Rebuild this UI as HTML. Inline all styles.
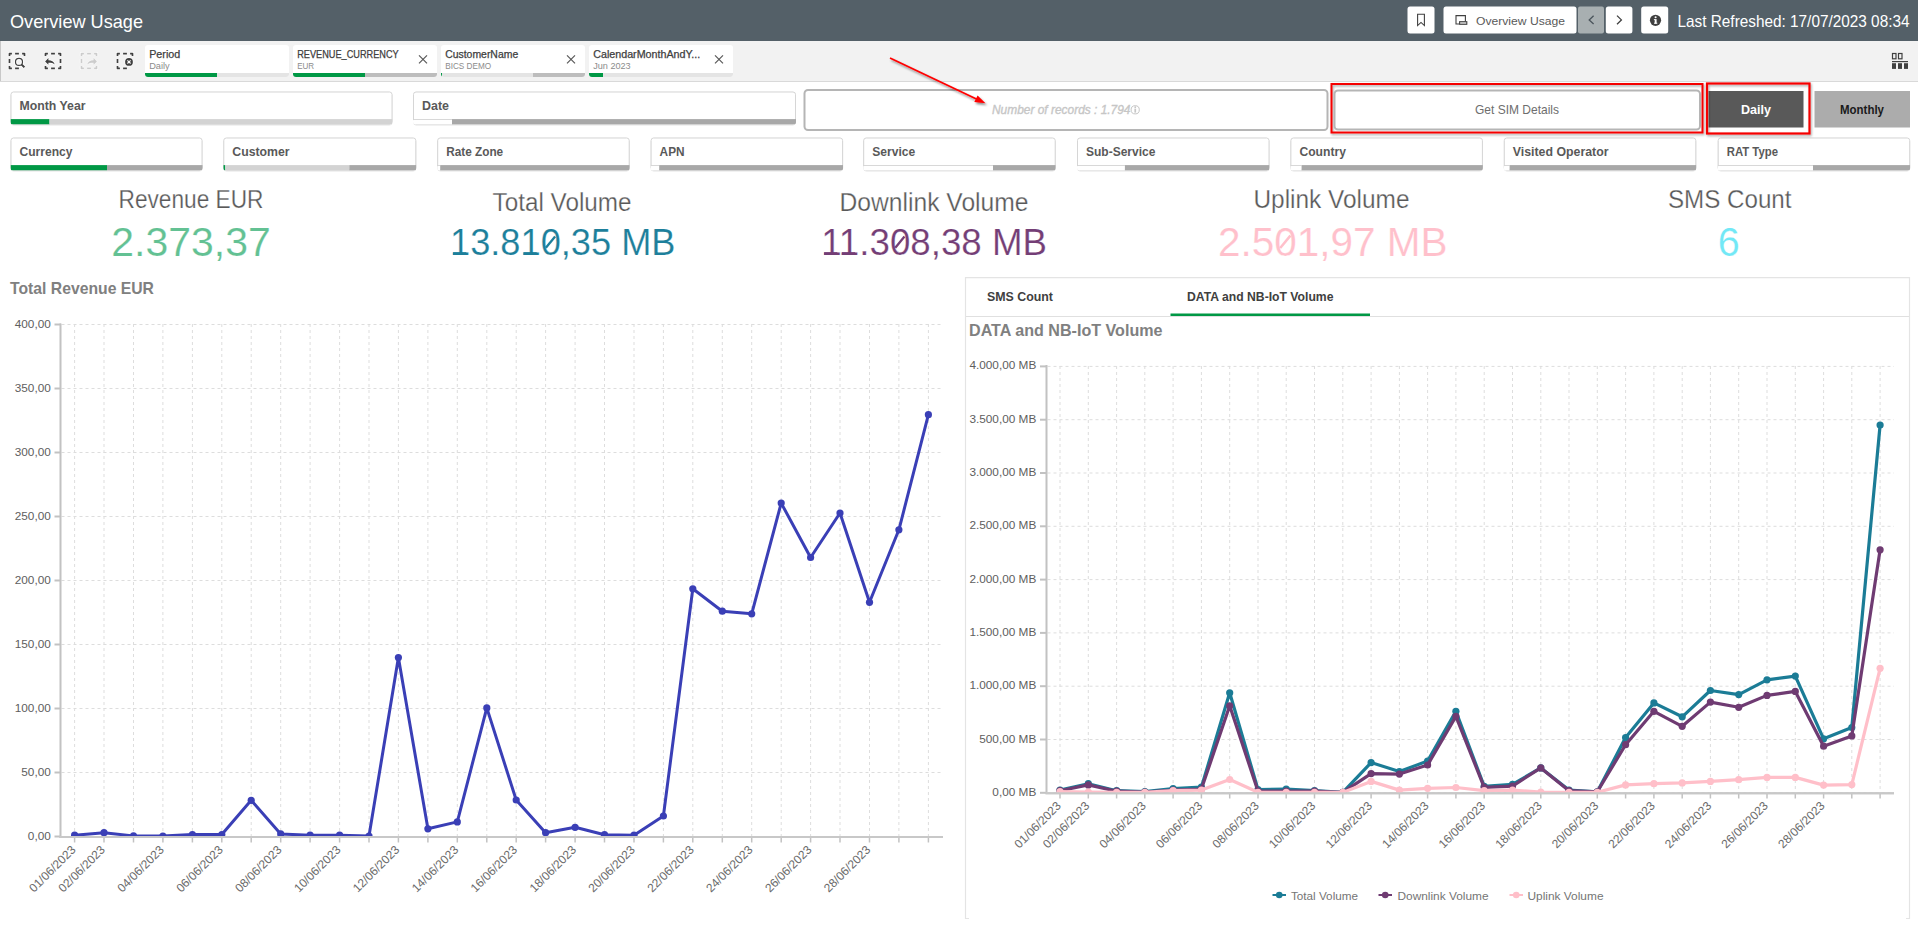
<!DOCTYPE html>
<html><head><meta charset="utf-8"><title>Overview Usage</title>
<style>html,body{margin:0;padding:0;background:#fff;overflow:hidden;width:1918px;height:928px}svg{display:block;font-family:"Liberation Sans", sans-serif}</style>
</head><body>
<svg width="1918" height="928" viewBox="0 0 1918 928">
<rect x="0" y="0" width="1918" height="41" fill="#546068"/>
<text x="10" y="28" font-size="18.4" fill="#ffffff" textLength="133" lengthAdjust="spacingAndGlyphs">Overview Usage</text>
<rect x="1407.5" y="6.5" width="27" height="27" fill="#ffffff" rx="2.5"/>
<path d="M1417.6 25.6 V14.3 H1424.4 V25.6 L1421 22.4 Z" fill="none" stroke="#404040" stroke-width="1.1" stroke-linejoin="miter"/>
<rect x="1443.5" y="6.5" width="133" height="27" fill="#ffffff" rx="2.5"/>
<path d="M1459 24 H1456 V15.6 H1465.4 V21.6" fill="none" stroke="#404040" stroke-width="1.1"/><rect x="1459.6" y="21.7" width="7.2" height="2.6" fill="#dcdcdc" stroke="#404040" stroke-width="1.1"/>
<text x="1476" y="24.5" font-size="11.8" fill="#595959" textLength="89" lengthAdjust="spacingAndGlyphs">Overview Usage</text>
<rect x="1578" y="6.5" width="26" height="27" fill="#a8afb1" rx="2"/>
<path d="M1593.6 15.8 L1589.2 19.9 L1593.6 24" fill="none" stroke="#4a545b" stroke-width="1.3"/>
<rect x="1605.8" y="6.5" width="26.6" height="27" fill="#ffffff" rx="2.5"/>
<path d="M1617 15.6 L1621.4 19.9 L1617 24.2" fill="none" stroke="#404040" stroke-width="1.3"/>
<rect x="1641.2" y="6.5" width="27" height="27" fill="#ffffff" rx="2.5"/>
<circle cx="1655.5" cy="20.3" r="5.6" fill="#404040"/><rect x="1654.7" y="19.1" width="1.9" height="4.5" fill="#fff"/><rect x="1653.9" y="19.1" width="1" height="1" fill="#fff"/><rect x="1654" y="22.7" width="3.3" height="1" fill="#fff"/><circle cx="1655.6" cy="17.2" r="1.05" fill="#fff"/>
<text x="1677.5" y="26.6" font-size="16.5" fill="#ffffff" textLength="232" lengthAdjust="spacingAndGlyphs">Last Refreshed: 17/07/2023 08:34</text>
<rect x="0" y="41" width="1918" height="40" fill="#f2f2f2"/>
<rect x="0" y="81" width="1918" height="1" fill="#d9d9d9"/>
<rect x="0" y="41" width="1" height="40" fill="#c8c8c8"/>
<path d="M9.5 55.9 V53.6 H11.9 M15.1 53.6 H18.9 M22.1 53.6 H24.5 V55.9 M9.5 59.1 V62.9 M9.5 66.1 V68.4 H11.9 M15.1 68.4 H18.9" fill="none" stroke="#ffffff" stroke-width="3.4" stroke-linejoin="round" opacity="0.9"/>
<path d="M9.5 55.9 V53.6 H11.9 M15.1 53.6 H18.9 M22.1 53.6 H24.5 V55.9 M9.5 59.1 V62.9 M9.5 66.1 V68.4 H11.9 M15.1 68.4 H18.9" fill="none" stroke="#404040" stroke-width="1.7" stroke-linejoin="round"/>
<g><circle cx="19" cy="61.9" r="3.5" fill="none" stroke="#fff" stroke-width="3.2" opacity="0.9"/><path d="M21.6 64.6 L24.4 67.3" stroke="#fff" stroke-width="3.6" opacity="0.9"/><circle cx="19" cy="61.9" r="3.5" fill="none" stroke="#404040" stroke-width="1.2"/><path d="M21.6 64.6 L24.4 67.3" stroke="#404040" stroke-width="2"/></g>
<path d="M45.5 55.9 V53.6 H47.9 M51.1 53.6 H54.9 M58.1 53.6 H60.5 V55.9 M60.5 59.1 V62.9 M45.5 66.1 V68.4 H47.9 M51.1 68.4 H54.9 M58.1 68.4 H60.5 V66.1" fill="none" stroke="#ffffff" stroke-width="3.4" stroke-linejoin="round" opacity="0.9"/>
<path d="M45.5 55.9 V53.6 H47.9 M51.1 53.6 H54.9 M58.1 53.6 H60.5 V55.9 M60.5 59.1 V62.9 M45.5 66.1 V68.4 H47.9 M51.1 68.4 H54.9 M58.1 68.4 H60.5 V66.1" fill="none" stroke="#404040" stroke-width="1.7" stroke-linejoin="round"/>
<path d="M45.1 61.5 L48.4 58.1 V60.2 C51.5 60.2 53.8 61.5 54.8 64.5 C53.5 63.2 51.5 62.8 48.4 62.8 V64.7 Z" fill="#404040" stroke="#fff" stroke-width="1.4" paint-order="stroke" stroke-linejoin="round"/>
<path d="M81.5 55.9 V53.6 H83.9 M87.1 53.6 H90.9 M94.1 53.6 H96.5 V55.9 M81.5 59.1 V62.9 M81.5 66.1 V68.4 H83.9 M87.1 68.4 H90.9 M94.1 68.4 H96.5 V66.1" fill="none" stroke="#ffffff" stroke-width="3.4" stroke-linejoin="round" opacity="0.9"/>
<path d="M81.5 55.9 V53.6 H83.9 M87.1 53.6 H90.9 M94.1 53.6 H96.5 V55.9 M81.5 59.1 V62.9 M81.5 66.1 V68.4 H83.9 M87.1 68.4 H90.9 M94.1 68.4 H96.5 V66.1" fill="none" stroke="#cccccc" stroke-width="1.7" stroke-linejoin="round"/>
<path d="M45.1 61.5 L48.4 58.1 V60.2 C51.5 60.2 53.8 61.5 54.8 64.5 C53.5 63.2 51.5 62.8 48.4 62.8 V64.7 Z" transform="translate(142 0) scale(-1 1)" fill="#cccccc" stroke="#f6f6f6" stroke-width="1.4" paint-order="stroke" stroke-linejoin="round"/>
<path d="M117.5 55.9 V53.6 H119.9 M123.1 53.6 H126.9 M130.1 53.6 H132.5 V55.9 M117.5 59.1 V62.9 M117.5 66.1 V68.4 H119.9 M123.1 68.4 H126.9" fill="none" stroke="#ffffff" stroke-width="3.4" stroke-linejoin="round" opacity="0.9"/>
<path d="M117.5 55.9 V53.6 H119.9 M123.1 53.6 H126.9 M130.1 53.6 H132.5 V55.9 M117.5 59.1 V62.9 M117.5 66.1 V68.4 H119.9 M123.1 68.4 H126.9" fill="none" stroke="#404040" stroke-width="1.7" stroke-linejoin="round"/>
<circle cx="129" cy="61.9" r="4.6" fill="#fff" opacity="0.9"/><circle cx="129" cy="61.9" r="3.9" fill="#404040"/><path d="M127.4 60.3 L130.6 63.5 M130.6 60.3 L127.4 63.5" stroke="#fff" stroke-width="1.1"/>
<rect x="145" y="45" width="144" height="32" fill="#ffffff" rx="3"/>
<clipPath id="pc145"><rect x="145" y="45" width="144" height="32" rx="3"/></clipPath>
<g clip-path="url(#pc145)">
<rect x="145" y="73" width="72" height="4" fill="#009845"/>
<rect x="217" y="73" width="72" height="4" fill="#e4e4e4"/>
</g>
<text x="149.2" y="58.3" font-size="10" fill="#404040" textLength="31" lengthAdjust="spacingAndGlyphs" stroke="#404040" stroke-width="0.25">Period</text>
<text x="149.2" y="68.9" font-size="9.4" fill="#8c8c8c" textLength="20.5" lengthAdjust="spacingAndGlyphs">Daily</text>
<rect x="293" y="45" width="144" height="32" fill="#ffffff" rx="3"/>
<clipPath id="pc293"><rect x="293" y="45" width="144" height="32" rx="3"/></clipPath>
<g clip-path="url(#pc293)">
<rect x="293" y="73" width="72" height="4" fill="#009845"/>
<rect x="365" y="73" width="72" height="4" fill="#bdbdbd"/>
</g>
<text x="297.2" y="58.3" font-size="10" fill="#404040" textLength="101.5" lengthAdjust="spacingAndGlyphs" stroke="#404040" stroke-width="0.25">REVENUE_CURRENCY</text>
<text x="297.2" y="68.9" font-size="9.4" fill="#8c8c8c" textLength="17" lengthAdjust="spacingAndGlyphs">EUR</text>
<path d="M419 55.3 l8 8 M427 55.3 l-8 8" stroke="#595959" stroke-width="1.2"/>
<rect x="441" y="45" width="144" height="32" fill="#ffffff" rx="3"/>
<clipPath id="pc441"><rect x="441" y="45" width="144" height="32" rx="3"/></clipPath>
<g clip-path="url(#pc441)">
<rect x="441" y="73" width="1" height="4" fill="#009845"/>
<rect x="442" y="73" width="91" height="4" fill="#e4e4e4"/>
<rect x="533" y="73" width="52" height="4" fill="#bdbdbd"/>
</g>
<text x="445.2" y="58.3" font-size="10" fill="#404040" textLength="73" lengthAdjust="spacingAndGlyphs" stroke="#404040" stroke-width="0.25">CustomerName</text>
<text x="445.2" y="68.9" font-size="9.4" fill="#8c8c8c" textLength="46" lengthAdjust="spacingAndGlyphs">BICS DEMO</text>
<path d="M567 55.3 l8 8 M575 55.3 l-8 8" stroke="#595959" stroke-width="1.2"/>
<rect x="589" y="45" width="144" height="32" fill="#ffffff" rx="3"/>
<clipPath id="pc589"><rect x="589" y="45" width="144" height="32" rx="3"/></clipPath>
<g clip-path="url(#pc589)">
<rect x="589" y="73" width="14" height="4" fill="#009845"/>
<rect x="603" y="73" width="130" height="4" fill="#e4e4e4"/>
</g>
<text x="593.2" y="58.3" font-size="10" fill="#404040" textLength="107" lengthAdjust="spacingAndGlyphs" stroke="#404040" stroke-width="0.25">CalendarMonthAndY...</text>
<text x="593.2" y="68.9" font-size="9.4" fill="#8c8c8c" textLength="37.5" lengthAdjust="spacingAndGlyphs">Jun 2023</text>
<path d="M715 55.3 l8 8 M723 55.3 l-8 8" stroke="#595959" stroke-width="1.2"/>
<rect x="1892.5" y="53.5" width="3.5" height="5.3" fill="none" stroke="#404040" stroke-width="1.2"/>
<rect x="1898.5" y="53.5" width="3.5" height="5.3" fill="none" stroke="#404040" stroke-width="1.2"/>
<rect x="1892" y="61" width="16" height="1.2" fill="#404040"/>
<rect x="1892" y="63.2" width="4" height="5.7" fill="#404040"/>
<rect x="1898" y="63.2" width="4" height="5.7" fill="#404040"/>
<rect x="1904" y="63.2" width="4" height="5.7" fill="#404040"/>
<defs><filter id="sh" x="-5%" y="-20%" width="110%" height="150%"><feDropShadow dx="0" dy="0.6" stdDeviation="0.6" flood-color="#000" flood-opacity="0.18"/></filter><filter id="sh3" x="-10%" y="-20%" width="120%" height="150%"><feDropShadow dx="1.5" dy="2" stdDeviation="1.3" flood-color="#000" flood-opacity="0.45"/></filter><filter id="sh2" x="-5%" y="-20%" width="110%" height="150%"><feDropShadow dx="1" dy="1.5" stdDeviation="1.2" flood-color="#000" flood-opacity="0.35"/></filter></defs>
<rect x="11.0" y="92.0" width="381" height="32" rx="2.5" fill="#ffffff" stroke="#d6d6d6" stroke-width="1" filter="url(#sh)"/>
<clipPath id="fc10_91"><rect x="10.5" y="91.5" width="382" height="33" rx="2.5"/></clipPath>
<g clip-path="url(#fc10_91)">
<rect x="10.5" y="119.1" width="39" height="5.4" fill="#009845"/>
<rect x="49.5" y="119.1" width="343" height="5.4" fill="#d3d3d3"/>
</g>
<text x="19.5" y="109.7" font-size="12.3" fill="#595959" font-weight="bold" textLength="66" lengthAdjust="spacingAndGlyphs">Month Year</text>
<rect x="413.5" y="92.0" width="382" height="32" rx="2.5" fill="#ffffff" stroke="#d6d6d6" stroke-width="1" filter="url(#sh)"/>
<clipPath id="fc413_91"><rect x="413" y="91.5" width="383" height="33" rx="2.5"/></clipPath>
<g clip-path="url(#fc413_91)">
<rect x="413" y="119.1" width="39" height="1" fill="#d4d4d4"/>
<rect x="413" y="120.1" width="39" height="4.4" fill="#ffffff"/>
<rect x="452" y="119.1" width="344" height="5.4" fill="#a8a8a8"/>
</g>
<text x="422" y="109.7" font-size="12.3" fill="#595959" font-weight="bold" textLength="27" lengthAdjust="spacingAndGlyphs">Date</text>
<rect x="11.0" y="138.0" width="191" height="32" rx="2.5" fill="#ffffff" stroke="#d6d6d6" stroke-width="1" filter="url(#sh)"/>
<clipPath id="fc10_137"><rect x="10.5" y="137.5" width="192" height="33" rx="2.5"/></clipPath>
<g clip-path="url(#fc10_137)">
<rect x="10.5" y="165.1" width="96.5" height="5.4" fill="#009845"/>
<rect x="107.0" y="165.1" width="96" height="5.4" fill="#a8a8a8"/>
</g>
<text x="19.5" y="155.7" font-size="12.3" fill="#595959" font-weight="bold" textLength="53" lengthAdjust="spacingAndGlyphs">Currency</text>
<rect x="223.8" y="138.0" width="192" height="32" rx="2.5" fill="#ffffff" stroke="#d6d6d6" stroke-width="1" filter="url(#sh)"/>
<clipPath id="fc223_137"><rect x="223.3" y="137.5" width="193" height="33" rx="2.5"/></clipPath>
<g clip-path="url(#fc223_137)">
<rect x="223.3" y="165.1" width="2" height="5.4" fill="#009845"/>
<rect x="225.3" y="165.1" width="124" height="5.4" fill="#d3d3d3"/>
<rect x="349.3" y="165.1" width="67" height="5.4" fill="#a8a8a8"/>
</g>
<text x="232.3" y="155.7" font-size="12.3" fill="#595959" font-weight="bold" textLength="57.3" lengthAdjust="spacingAndGlyphs">Customer</text>
<rect x="437.7" y="138.0" width="191.5" height="32" rx="2.5" fill="#ffffff" stroke="#d6d6d6" stroke-width="1" filter="url(#sh)"/>
<clipPath id="fc437_137"><rect x="437.2" y="137.5" width="192.5" height="33" rx="2.5"/></clipPath>
<g clip-path="url(#fc437_137)">
<rect x="437.2" y="165.1" width="3" height="1" fill="#d4d4d4"/>
<rect x="437.2" y="166.1" width="3" height="4.4" fill="#ffffff"/>
<rect x="440.2" y="165.1" width="189.5" height="5.4" fill="#a8a8a8"/>
</g>
<text x="446.2" y="155.7" font-size="12.3" fill="#595959" font-weight="bold" textLength="57" lengthAdjust="spacingAndGlyphs">Rate Zone</text>
<rect x="651.1" y="138.0" width="191.5" height="32" rx="2.5" fill="#ffffff" stroke="#d6d6d6" stroke-width="1" filter="url(#sh)"/>
<clipPath id="fc650_137"><rect x="650.6" y="137.5" width="192.5" height="33" rx="2.5"/></clipPath>
<g clip-path="url(#fc650_137)">
<rect x="650.6" y="165.1" width="8.6" height="1" fill="#d4d4d4"/>
<rect x="650.6" y="166.1" width="8.6" height="4.4" fill="#ffffff"/>
<rect x="659.2" y="165.1" width="183.9" height="5.4" fill="#a8a8a8"/>
</g>
<text x="659.6" y="155.7" font-size="12.3" fill="#595959" font-weight="bold" textLength="25" lengthAdjust="spacingAndGlyphs">APN</text>
<rect x="863.7" y="138.0" width="191.5" height="32" rx="2.5" fill="#ffffff" stroke="#d6d6d6" stroke-width="1" filter="url(#sh)"/>
<clipPath id="fc863_137"><rect x="863.2" y="137.5" width="192.5" height="33" rx="2.5"/></clipPath>
<g clip-path="url(#fc863_137)">
<rect x="863.2" y="165.1" width="129.8" height="1" fill="#d4d4d4"/>
<rect x="863.2" y="166.1" width="129.8" height="4.4" fill="#ffffff"/>
<rect x="993.0" y="165.1" width="62.69999999999999" height="5.4" fill="#a8a8a8"/>
</g>
<text x="872.2" y="155.7" font-size="12.3" fill="#595959" font-weight="bold" textLength="43" lengthAdjust="spacingAndGlyphs">Service</text>
<rect x="1077.5" y="138.0" width="191.5" height="32" rx="2.5" fill="#ffffff" stroke="#d6d6d6" stroke-width="1" filter="url(#sh)"/>
<clipPath id="fc1077_137"><rect x="1077" y="137.5" width="192.5" height="33" rx="2.5"/></clipPath>
<g clip-path="url(#fc1077_137)">
<rect x="1077" y="165.1" width="47.9" height="1" fill="#d4d4d4"/>
<rect x="1077" y="166.1" width="47.9" height="4.4" fill="#ffffff"/>
<rect x="1124.9" y="165.1" width="144.6" height="5.4" fill="#a8a8a8"/>
</g>
<text x="1086" y="155.7" font-size="12.3" fill="#595959" font-weight="bold" textLength="69.4" lengthAdjust="spacingAndGlyphs">Sub-Service</text>
<rect x="1290.9" y="138.0" width="191.5" height="32" rx="2.5" fill="#ffffff" stroke="#d6d6d6" stroke-width="1" filter="url(#sh)"/>
<clipPath id="fc1290_137"><rect x="1290.4" y="137.5" width="192.5" height="33" rx="2.5"/></clipPath>
<g clip-path="url(#fc1290_137)">
<rect x="1290.4" y="165.1" width="11.2" height="1" fill="#d4d4d4"/>
<rect x="1290.4" y="166.1" width="11.2" height="4.4" fill="#ffffff"/>
<rect x="1301.6000000000001" y="165.1" width="181.3" height="5.4" fill="#a8a8a8"/>
</g>
<text x="1299.4" y="155.7" font-size="12.3" fill="#595959" font-weight="bold" textLength="46.5" lengthAdjust="spacingAndGlyphs">Country</text>
<rect x="1504.3" y="138.0" width="191.5" height="32" rx="2.5" fill="#ffffff" stroke="#d6d6d6" stroke-width="1" filter="url(#sh)"/>
<clipPath id="fc1503_137"><rect x="1503.8" y="137.5" width="192.5" height="33" rx="2.5"/></clipPath>
<g clip-path="url(#fc1503_137)">
<rect x="1503.8" y="165.1" width="5.8" height="1" fill="#d4d4d4"/>
<rect x="1503.8" y="166.1" width="5.8" height="4.4" fill="#ffffff"/>
<rect x="1509.6" y="165.1" width="186.7" height="5.4" fill="#a8a8a8"/>
</g>
<text x="1512.8" y="155.7" font-size="12.3" fill="#595959" font-weight="bold" textLength="95.7" lengthAdjust="spacingAndGlyphs">Visited Operator</text>
<rect x="1718.2" y="138.0" width="191.5" height="32" rx="2.5" fill="#ffffff" stroke="#d6d6d6" stroke-width="1" filter="url(#sh)"/>
<clipPath id="fc1717_137"><rect x="1717.7" y="137.5" width="192.5" height="33" rx="2.5"/></clipPath>
<g clip-path="url(#fc1717_137)">
<rect x="1717.7" y="165.1" width="95.3" height="1" fill="#d4d4d4"/>
<rect x="1717.7" y="166.1" width="95.3" height="4.4" fill="#ffffff"/>
<rect x="1813.0" y="165.1" width="97.2" height="5.4" fill="#a8a8a8"/>
</g>
<text x="1726.7" y="155.7" font-size="12.3" fill="#595959" font-weight="bold" textLength="51.3" lengthAdjust="spacingAndGlyphs">RAT Type</text>
<rect x="804.5" y="90" width="523" height="40" rx="3.5" fill="#fff" stroke="#b5b5b5" stroke-width="2"/>
<text x="992" y="114" font-size="12.2" fill="#c6c6c6" font-style="italic" textLength="138.5" lengthAdjust="spacingAndGlyphs" stroke="#c6c6c6" stroke-width="0.35">Number of records : 1.794</text>
<circle cx="1135.2" cy="109.8" r="4.1" fill="none" stroke="#c6c6c6" stroke-width="1"/><rect x="1134.4" y="108.6" width="1.7" height="4" fill="#c6c6c6"/><circle cx="1135.25" cy="107.2" r="0.9" fill="#c6c6c6"/>
<rect x="1331.5" y="84" width="371" height="48.5" fill="none" stroke="#f50000" stroke-width="2" filter="url(#sh2)"/>
<rect x="1334.5" y="90.5" width="365.5" height="39" rx="3.5" fill="#fff" stroke="#b5b5b5" stroke-width="2"/>
<text x="1475" y="114" font-size="12.6" fill="#6e6e6e" textLength="84" lengthAdjust="spacingAndGlyphs">Get SIM Details</text>
<rect x="1708.5" y="91" width="95" height="36.5" fill="#595959"/>
<rect x="1707" y="83.5" width="102.5" height="50" fill="none" stroke="#f50000" stroke-width="2.2" filter="url(#sh2)"/>
<text x="1741" y="114" font-size="12.6" fill="#ffffff" font-weight="bold" textLength="30" lengthAdjust="spacingAndGlyphs">Daily</text>
<rect x="1814.5" y="91" width="95.5" height="36.5" fill="#acacac"/>
<text x="1840" y="114" font-size="12.6" fill="#1a1a1a" font-weight="bold" textLength="44" lengthAdjust="spacingAndGlyphs">Monthly</text>
<g filter="url(#sh3)"><path d="M890 58 L978 99.8" stroke="#ff0000" stroke-width="1.8"/><path d="M985.5 103.2 L974.3 101.9 L977.6 95.4 z" fill="#ff0000"/></g>
<text x="118.5" y="208" font-size="25.3" fill="#595959" textLength="145" lengthAdjust="spacingAndGlyphs" stroke="#fff" stroke-width="0.25">Revenue EUR</text>
<text x="111.3" y="256" font-size="40" fill="#63c193" textLength="159.5" lengthAdjust="spacingAndGlyphs" stroke="#fff" stroke-width="0.2">2.373,37</text>
<text x="492.5" y="211" font-size="25.4" fill="#595959" textLength="139" lengthAdjust="spacingAndGlyphs" stroke="#fff" stroke-width="0.25">Total Volume</text>
<text x="450" y="255" font-size="36" fill="#1d7f9b" textLength="225.5" lengthAdjust="spacingAndGlyphs" stroke="#fff" stroke-width="0.2">13.810,35 MB</text>
<text x="839.5" y="211" font-size="25.4" fill="#595959" textLength="189" lengthAdjust="spacingAndGlyphs" stroke="#fff" stroke-width="0.25">Downlink Volume</text>
<text x="821.2" y="255" font-size="36" fill="#743e76" textLength="225.8" lengthAdjust="spacingAndGlyphs" stroke="#fff" stroke-width="0.2">11.308,38 MB</text>
<text x="1253.5" y="208" font-size="25.0" fill="#595959" textLength="156" lengthAdjust="spacingAndGlyphs" stroke="#fff" stroke-width="0.25">Uplink Volume</text>
<text x="1218" y="256" font-size="40" fill="#ffc0cb" textLength="229.5" lengthAdjust="spacingAndGlyphs" stroke="#fff" stroke-width="0.2">2.501,97 MB</text>
<text x="1668" y="208" font-size="25.3" fill="#595959" textLength="123.5" lengthAdjust="spacingAndGlyphs" stroke="#fff" stroke-width="0.25">SMS Count</text>
<text x="1717.8" y="256" font-size="40" fill="#72e8f6" textLength="22" lengthAdjust="spacingAndGlyphs" stroke="#fff" stroke-width="0.2">6</text>
<path d="M545.9 247.8 L555.1 236.6" stroke="#1d7f9b" stroke-width="2.30"/>
<path d="M895.3 247.8 L904.5 236.6" stroke="#743e76" stroke-width="2.30"/>
<path d="M1280.2 248.0 L1290.4 235.6" stroke="#ffc0cb" stroke-width="2.56"/>
<rect x="453.1" y="252.2" width="13.2" height="2.75" fill="#1d7f9b"/>
<rect x="523.5" y="252.2" width="13.2" height="2.75" fill="#1d7f9b"/>
<rect x="824.1" y="252.2" width="13.2" height="2.75" fill="#743e76"/>
<rect x="841.9" y="252.2" width="13.2" height="2.75" fill="#743e76"/>
<rect x="1300.4" y="252.9" width="14.7" height="3.06" fill="#ffc0cb"/>
<text x="10" y="294" font-size="16.4" fill="#808080" font-weight="bold" textLength="144" lengthAdjust="spacingAndGlyphs">Total Revenue EUR</text>
<path d="M61.5 836.5 H943" stroke="#dddddd" stroke-width="1" stroke-dasharray="3 3"/>
<text x="50.8" y="839.5" font-size="11.8" fill="#5e5e5e" text-anchor="end">0,00</text>
<path d="M54.5 836.5 H61" stroke="#c2c2c2" stroke-width="2"/>
<path d="M61.5 772.5 H943" stroke="#dddddd" stroke-width="1" stroke-dasharray="3 3"/>
<text x="50.8" y="775.5" font-size="11.8" fill="#5e5e5e" text-anchor="end">50,00</text>
<path d="M54.5 772.5 H61" stroke="#c2c2c2" stroke-width="2"/>
<path d="M61.5 708.5 H943" stroke="#dddddd" stroke-width="1" stroke-dasharray="3 3"/>
<text x="50.8" y="711.5" font-size="11.8" fill="#5e5e5e" text-anchor="end">100,00</text>
<path d="M54.5 708.5 H61" stroke="#c2c2c2" stroke-width="2"/>
<path d="M61.5 644.5 H943" stroke="#dddddd" stroke-width="1" stroke-dasharray="3 3"/>
<text x="50.8" y="647.5" font-size="11.8" fill="#5e5e5e" text-anchor="end">150,00</text>
<path d="M54.5 644.5 H61" stroke="#c2c2c2" stroke-width="2"/>
<path d="M61.5 580.5 H943" stroke="#dddddd" stroke-width="1" stroke-dasharray="3 3"/>
<text x="50.8" y="583.5" font-size="11.8" fill="#5e5e5e" text-anchor="end">200,00</text>
<path d="M54.5 580.5 H61" stroke="#c2c2c2" stroke-width="2"/>
<path d="M61.5 516.5 H943" stroke="#dddddd" stroke-width="1" stroke-dasharray="3 3"/>
<text x="50.8" y="519.5" font-size="11.8" fill="#5e5e5e" text-anchor="end">250,00</text>
<path d="M54.5 516.5 H61" stroke="#c2c2c2" stroke-width="2"/>
<path d="M61.5 452.5 H943" stroke="#dddddd" stroke-width="1" stroke-dasharray="3 3"/>
<text x="50.8" y="455.5" font-size="11.8" fill="#5e5e5e" text-anchor="end">300,00</text>
<path d="M54.5 452.5 H61" stroke="#c2c2c2" stroke-width="2"/>
<path d="M61.5 388.5 H943" stroke="#dddddd" stroke-width="1" stroke-dasharray="3 3"/>
<text x="50.8" y="391.5" font-size="11.8" fill="#5e5e5e" text-anchor="end">350,00</text>
<path d="M54.5 388.5 H61" stroke="#c2c2c2" stroke-width="2"/>
<path d="M61.5 324.5 H943" stroke="#dddddd" stroke-width="1" stroke-dasharray="3 3"/>
<text x="50.8" y="327.5" font-size="11.8" fill="#5e5e5e" text-anchor="end">400,00</text>
<path d="M54.5 324.5 H61" stroke="#c2c2c2" stroke-width="2"/>
<path d="M74.6 324 V836" stroke="#dddddd" stroke-width="1" stroke-dasharray="3 3"/>
<path d="M74.6 837 V842.5" stroke="#c2c2c2" stroke-width="1.5"/>
<path d="M104.0 324 V836" stroke="#dddddd" stroke-width="1" stroke-dasharray="3 3"/>
<path d="M104.0 837 V842.5" stroke="#c2c2c2" stroke-width="1.5"/>
<path d="M133.5 324 V836" stroke="#dddddd" stroke-width="1" stroke-dasharray="3 3"/>
<path d="M133.5 837 V842.5" stroke="#c2c2c2" stroke-width="1.5"/>
<path d="M162.9 324 V836" stroke="#dddddd" stroke-width="1" stroke-dasharray="3 3"/>
<path d="M162.9 837 V842.5" stroke="#c2c2c2" stroke-width="1.5"/>
<path d="M192.4 324 V836" stroke="#dddddd" stroke-width="1" stroke-dasharray="3 3"/>
<path d="M192.4 837 V842.5" stroke="#c2c2c2" stroke-width="1.5"/>
<path d="M221.8 324 V836" stroke="#dddddd" stroke-width="1" stroke-dasharray="3 3"/>
<path d="M221.8 837 V842.5" stroke="#c2c2c2" stroke-width="1.5"/>
<path d="M251.2 324 V836" stroke="#dddddd" stroke-width="1" stroke-dasharray="3 3"/>
<path d="M251.2 837 V842.5" stroke="#c2c2c2" stroke-width="1.5"/>
<path d="M280.7 324 V836" stroke="#dddddd" stroke-width="1" stroke-dasharray="3 3"/>
<path d="M280.7 837 V842.5" stroke="#c2c2c2" stroke-width="1.5"/>
<path d="M310.1 324 V836" stroke="#dddddd" stroke-width="1" stroke-dasharray="3 3"/>
<path d="M310.1 837 V842.5" stroke="#c2c2c2" stroke-width="1.5"/>
<path d="M339.6 324 V836" stroke="#dddddd" stroke-width="1" stroke-dasharray="3 3"/>
<path d="M339.6 837 V842.5" stroke="#c2c2c2" stroke-width="1.5"/>
<path d="M369.0 324 V836" stroke="#dddddd" stroke-width="1" stroke-dasharray="3 3"/>
<path d="M369.0 837 V842.5" stroke="#c2c2c2" stroke-width="1.5"/>
<path d="M398.4 324 V836" stroke="#dddddd" stroke-width="1" stroke-dasharray="3 3"/>
<path d="M398.4 837 V842.5" stroke="#c2c2c2" stroke-width="1.5"/>
<path d="M427.9 324 V836" stroke="#dddddd" stroke-width="1" stroke-dasharray="3 3"/>
<path d="M427.9 837 V842.5" stroke="#c2c2c2" stroke-width="1.5"/>
<path d="M457.3 324 V836" stroke="#dddddd" stroke-width="1" stroke-dasharray="3 3"/>
<path d="M457.3 837 V842.5" stroke="#c2c2c2" stroke-width="1.5"/>
<path d="M486.8 324 V836" stroke="#dddddd" stroke-width="1" stroke-dasharray="3 3"/>
<path d="M486.8 837 V842.5" stroke="#c2c2c2" stroke-width="1.5"/>
<path d="M516.2 324 V836" stroke="#dddddd" stroke-width="1" stroke-dasharray="3 3"/>
<path d="M516.2 837 V842.5" stroke="#c2c2c2" stroke-width="1.5"/>
<path d="M545.6 324 V836" stroke="#dddddd" stroke-width="1" stroke-dasharray="3 3"/>
<path d="M545.6 837 V842.5" stroke="#c2c2c2" stroke-width="1.5"/>
<path d="M575.1 324 V836" stroke="#dddddd" stroke-width="1" stroke-dasharray="3 3"/>
<path d="M575.1 837 V842.5" stroke="#c2c2c2" stroke-width="1.5"/>
<path d="M604.5 324 V836" stroke="#dddddd" stroke-width="1" stroke-dasharray="3 3"/>
<path d="M604.5 837 V842.5" stroke="#c2c2c2" stroke-width="1.5"/>
<path d="M634.0 324 V836" stroke="#dddddd" stroke-width="1" stroke-dasharray="3 3"/>
<path d="M634.0 837 V842.5" stroke="#c2c2c2" stroke-width="1.5"/>
<path d="M663.4 324 V836" stroke="#dddddd" stroke-width="1" stroke-dasharray="3 3"/>
<path d="M663.4 837 V842.5" stroke="#c2c2c2" stroke-width="1.5"/>
<path d="M692.8 324 V836" stroke="#dddddd" stroke-width="1" stroke-dasharray="3 3"/>
<path d="M692.8 837 V842.5" stroke="#c2c2c2" stroke-width="1.5"/>
<path d="M722.3 324 V836" stroke="#dddddd" stroke-width="1" stroke-dasharray="3 3"/>
<path d="M722.3 837 V842.5" stroke="#c2c2c2" stroke-width="1.5"/>
<path d="M751.7 324 V836" stroke="#dddddd" stroke-width="1" stroke-dasharray="3 3"/>
<path d="M751.7 837 V842.5" stroke="#c2c2c2" stroke-width="1.5"/>
<path d="M781.2 324 V836" stroke="#dddddd" stroke-width="1" stroke-dasharray="3 3"/>
<path d="M781.2 837 V842.5" stroke="#c2c2c2" stroke-width="1.5"/>
<path d="M810.6 324 V836" stroke="#dddddd" stroke-width="1" stroke-dasharray="3 3"/>
<path d="M810.6 837 V842.5" stroke="#c2c2c2" stroke-width="1.5"/>
<path d="M840.0 324 V836" stroke="#dddddd" stroke-width="1" stroke-dasharray="3 3"/>
<path d="M840.0 837 V842.5" stroke="#c2c2c2" stroke-width="1.5"/>
<path d="M869.5 324 V836" stroke="#dddddd" stroke-width="1" stroke-dasharray="3 3"/>
<path d="M869.5 837 V842.5" stroke="#c2c2c2" stroke-width="1.5"/>
<path d="M898.9 324 V836" stroke="#dddddd" stroke-width="1" stroke-dasharray="3 3"/>
<path d="M898.9 837 V842.5" stroke="#c2c2c2" stroke-width="1.5"/>
<path d="M928.4 324 V836" stroke="#dddddd" stroke-width="1" stroke-dasharray="3 3"/>
<path d="M928.4 837 V842.5" stroke="#c2c2c2" stroke-width="1.5"/>
<path d="M60.5 323.5 V838" stroke="#c2c2c2" stroke-width="2"/>
<path d="M59.5 837 H943" stroke="#c8c8c8" stroke-width="2"/>
<clipPath id="lclip"><rect x="61" y="300" width="890" height="537"/></clipPath><g clip-path="url(#lclip)">
<path d="M74.6 835.2 L104.0 832.7 L133.5 835.9 L162.9 836.1 L192.4 834.5 L221.8 834.5 L251.2 800.3 L280.7 833.9 L310.1 835.2 L339.6 835.2 L369.0 836.1 L398.4 657.6 L427.9 828.8 L457.3 821.9 L486.8 707.9 L516.2 800.0 L545.6 832.7 L575.1 827.3 L604.5 834.7 L634.0 835.2 L663.4 816.0 L692.8 588.8 L722.3 611.2 L751.7 613.8 L781.2 503.1 L810.6 557.5 L840.0 513.0 L869.5 602.3 L898.9 529.8 L928.4 414.7" fill="none" stroke="#3a3fb6" stroke-width="3" stroke-linejoin="round"/>
<circle cx="74.6" cy="835.2" r="3.6" fill="#3a3fb6"/>
<circle cx="104.0" cy="832.7" r="3.6" fill="#3a3fb6"/>
<circle cx="133.5" cy="835.9" r="3.6" fill="#3a3fb6"/>
<circle cx="162.9" cy="836.1" r="3.6" fill="#3a3fb6"/>
<circle cx="192.4" cy="834.5" r="3.6" fill="#3a3fb6"/>
<circle cx="221.8" cy="834.5" r="3.6" fill="#3a3fb6"/>
<circle cx="251.2" cy="800.3" r="3.6" fill="#3a3fb6"/>
<circle cx="280.7" cy="833.9" r="3.6" fill="#3a3fb6"/>
<circle cx="310.1" cy="835.2" r="3.6" fill="#3a3fb6"/>
<circle cx="339.6" cy="835.2" r="3.6" fill="#3a3fb6"/>
<circle cx="369.0" cy="836.1" r="3.6" fill="#3a3fb6"/>
<circle cx="398.4" cy="657.6" r="3.6" fill="#3a3fb6"/>
<circle cx="427.9" cy="828.8" r="3.6" fill="#3a3fb6"/>
<circle cx="457.3" cy="821.9" r="3.6" fill="#3a3fb6"/>
<circle cx="486.8" cy="707.9" r="3.6" fill="#3a3fb6"/>
<circle cx="516.2" cy="800.0" r="3.6" fill="#3a3fb6"/>
<circle cx="545.6" cy="832.7" r="3.6" fill="#3a3fb6"/>
<circle cx="575.1" cy="827.3" r="3.6" fill="#3a3fb6"/>
<circle cx="604.5" cy="834.7" r="3.6" fill="#3a3fb6"/>
<circle cx="634.0" cy="835.2" r="3.6" fill="#3a3fb6"/>
<circle cx="663.4" cy="816.0" r="3.6" fill="#3a3fb6"/>
<circle cx="692.8" cy="588.8" r="3.6" fill="#3a3fb6"/>
<circle cx="722.3" cy="611.2" r="3.6" fill="#3a3fb6"/>
<circle cx="751.7" cy="613.8" r="3.6" fill="#3a3fb6"/>
<circle cx="781.2" cy="503.1" r="3.6" fill="#3a3fb6"/>
<circle cx="810.6" cy="557.5" r="3.6" fill="#3a3fb6"/>
<circle cx="840.0" cy="513.0" r="3.6" fill="#3a3fb6"/>
<circle cx="869.5" cy="602.3" r="3.6" fill="#3a3fb6"/>
<circle cx="898.9" cy="529.8" r="3.6" fill="#3a3fb6"/>
<circle cx="928.4" cy="414.7" r="3.6" fill="#3a3fb6"/>
</g>
<path d="M59.5 837 H943" stroke="#c8c8c8" stroke-width="2"/>
<text x="0" y="0" font-size="12" fill="#6b6b6b" text-anchor="end" transform="translate(76.4 850.6) rotate(-45)">01/06/2023</text>
<text x="0" y="0" font-size="12" fill="#6b6b6b" text-anchor="end" transform="translate(105.8 850.6) rotate(-45)">02/06/2023</text>
<text x="0" y="0" font-size="12" fill="#6b6b6b" text-anchor="end" transform="translate(164.7 850.6) rotate(-45)">04/06/2023</text>
<text x="0" y="0" font-size="12" fill="#6b6b6b" text-anchor="end" transform="translate(223.6 850.6) rotate(-45)">06/06/2023</text>
<text x="0" y="0" font-size="12" fill="#6b6b6b" text-anchor="end" transform="translate(282.5 850.6) rotate(-45)">08/06/2023</text>
<text x="0" y="0" font-size="12" fill="#6b6b6b" text-anchor="end" transform="translate(341.4 850.6) rotate(-45)">10/06/2023</text>
<text x="0" y="0" font-size="12" fill="#6b6b6b" text-anchor="end" transform="translate(400.2 850.6) rotate(-45)">12/06/2023</text>
<text x="0" y="0" font-size="12" fill="#6b6b6b" text-anchor="end" transform="translate(459.1 850.6) rotate(-45)">14/06/2023</text>
<text x="0" y="0" font-size="12" fill="#6b6b6b" text-anchor="end" transform="translate(518.0 850.6) rotate(-45)">16/06/2023</text>
<text x="0" y="0" font-size="12" fill="#6b6b6b" text-anchor="end" transform="translate(576.9 850.6) rotate(-45)">18/06/2023</text>
<text x="0" y="0" font-size="12" fill="#6b6b6b" text-anchor="end" transform="translate(635.8 850.6) rotate(-45)">20/06/2023</text>
<text x="0" y="0" font-size="12" fill="#6b6b6b" text-anchor="end" transform="translate(694.6 850.6) rotate(-45)">22/06/2023</text>
<text x="0" y="0" font-size="12" fill="#6b6b6b" text-anchor="end" transform="translate(753.5 850.6) rotate(-45)">24/06/2023</text>
<text x="0" y="0" font-size="12" fill="#6b6b6b" text-anchor="end" transform="translate(812.4 850.6) rotate(-45)">26/06/2023</text>
<text x="0" y="0" font-size="12" fill="#6b6b6b" text-anchor="end" transform="translate(871.3 850.6) rotate(-45)">28/06/2023</text>
<path d="M969 918.5 H965.5 V277.7 H1909.5 V918.5 H1906" fill="none" stroke="#e4e4e4" stroke-width="1.2"/>
<rect x="966" y="316" width="943" height="1" fill="#e0e0e0"/>
<rect x="1170.5" y="313.5" width="199.5" height="2.5" fill="#009845"/>
<text x="987" y="301" font-size="12.2" fill="#404040" font-weight="bold" textLength="66" lengthAdjust="spacingAndGlyphs">SMS Count</text>
<text x="1187" y="301" font-size="12.2" fill="#404040" font-weight="bold" textLength="146.5" lengthAdjust="spacingAndGlyphs">DATA and NB-IoT Volume</text>
<text x="969" y="336.2" font-size="16.2" fill="#808080" font-weight="bold" textLength="193.5" lengthAdjust="spacingAndGlyphs">DATA and NB-IoT Volume</text>
<path d="M1047.5 792.8 H1894" stroke="#dddddd" stroke-width="1" stroke-dasharray="3 3"/>
<text x="1036.3" y="795.8" font-size="11.8" fill="#5e5e5e" text-anchor="end">0,00 MB</text>
<path d="M1040 792.8 H1046.5" stroke="#c2c2c2" stroke-width="2"/>
<path d="M1047.5 739.5 H1894" stroke="#dddddd" stroke-width="1" stroke-dasharray="3 3"/>
<text x="1036.3" y="742.5" font-size="11.8" fill="#5e5e5e" text-anchor="end">500,00 MB</text>
<path d="M1040 739.5 H1046.5" stroke="#c2c2c2" stroke-width="2"/>
<path d="M1047.5 686.2 H1894" stroke="#dddddd" stroke-width="1" stroke-dasharray="3 3"/>
<text x="1036.3" y="689.1999999999999" font-size="11.8" fill="#5e5e5e" text-anchor="end">1.000,00 MB</text>
<path d="M1040 686.2 H1046.5" stroke="#c2c2c2" stroke-width="2"/>
<path d="M1047.5 632.9 H1894" stroke="#dddddd" stroke-width="1" stroke-dasharray="3 3"/>
<text x="1036.3" y="635.9" font-size="11.8" fill="#5e5e5e" text-anchor="end">1.500,00 MB</text>
<path d="M1040 632.9 H1046.5" stroke="#c2c2c2" stroke-width="2"/>
<path d="M1047.5 579.6 H1894" stroke="#dddddd" stroke-width="1" stroke-dasharray="3 3"/>
<text x="1036.3" y="582.5999999999999" font-size="11.8" fill="#5e5e5e" text-anchor="end">2.000,00 MB</text>
<path d="M1040 579.6 H1046.5" stroke="#c2c2c2" stroke-width="2"/>
<path d="M1047.5 526.3 H1894" stroke="#dddddd" stroke-width="1" stroke-dasharray="3 3"/>
<text x="1036.3" y="529.3" font-size="11.8" fill="#5e5e5e" text-anchor="end">2.500,00 MB</text>
<path d="M1040 526.3 H1046.5" stroke="#c2c2c2" stroke-width="2"/>
<path d="M1047.5 473.0 H1894" stroke="#dddddd" stroke-width="1" stroke-dasharray="3 3"/>
<text x="1036.3" y="476.0" font-size="11.8" fill="#5e5e5e" text-anchor="end">3.000,00 MB</text>
<path d="M1040 473.0 H1046.5" stroke="#c2c2c2" stroke-width="2"/>
<path d="M1047.5 419.7 H1894" stroke="#dddddd" stroke-width="1" stroke-dasharray="3 3"/>
<text x="1036.3" y="422.7" font-size="11.8" fill="#5e5e5e" text-anchor="end">3.500,00 MB</text>
<path d="M1040 419.7 H1046.5" stroke="#c2c2c2" stroke-width="2"/>
<path d="M1047.5 366.4 H1894" stroke="#dddddd" stroke-width="1" stroke-dasharray="3 3"/>
<text x="1036.3" y="369.4" font-size="11.8" fill="#5e5e5e" text-anchor="end">4.000,00 MB</text>
<path d="M1040 366.4 H1046.5" stroke="#c2c2c2" stroke-width="2"/>
<path d="M1060.0 366 V792" stroke="#dddddd" stroke-width="1" stroke-dasharray="3 3"/>
<path d="M1060.0 793 V798.5" stroke="#c2c2c2" stroke-width="1.5"/>
<path d="M1088.3 366 V792" stroke="#dddddd" stroke-width="1" stroke-dasharray="3 3"/>
<path d="M1088.3 793 V798.5" stroke="#c2c2c2" stroke-width="1.5"/>
<path d="M1116.6 366 V792" stroke="#dddddd" stroke-width="1" stroke-dasharray="3 3"/>
<path d="M1116.6 793 V798.5" stroke="#c2c2c2" stroke-width="1.5"/>
<path d="M1144.8 366 V792" stroke="#dddddd" stroke-width="1" stroke-dasharray="3 3"/>
<path d="M1144.8 793 V798.5" stroke="#c2c2c2" stroke-width="1.5"/>
<path d="M1173.1 366 V792" stroke="#dddddd" stroke-width="1" stroke-dasharray="3 3"/>
<path d="M1173.1 793 V798.5" stroke="#c2c2c2" stroke-width="1.5"/>
<path d="M1201.4 366 V792" stroke="#dddddd" stroke-width="1" stroke-dasharray="3 3"/>
<path d="M1201.4 793 V798.5" stroke="#c2c2c2" stroke-width="1.5"/>
<path d="M1229.7 366 V792" stroke="#dddddd" stroke-width="1" stroke-dasharray="3 3"/>
<path d="M1229.7 793 V798.5" stroke="#c2c2c2" stroke-width="1.5"/>
<path d="M1258.0 366 V792" stroke="#dddddd" stroke-width="1" stroke-dasharray="3 3"/>
<path d="M1258.0 793 V798.5" stroke="#c2c2c2" stroke-width="1.5"/>
<path d="M1286.2 366 V792" stroke="#dddddd" stroke-width="1" stroke-dasharray="3 3"/>
<path d="M1286.2 793 V798.5" stroke="#c2c2c2" stroke-width="1.5"/>
<path d="M1314.5 366 V792" stroke="#dddddd" stroke-width="1" stroke-dasharray="3 3"/>
<path d="M1314.5 793 V798.5" stroke="#c2c2c2" stroke-width="1.5"/>
<path d="M1342.8 366 V792" stroke="#dddddd" stroke-width="1" stroke-dasharray="3 3"/>
<path d="M1342.8 793 V798.5" stroke="#c2c2c2" stroke-width="1.5"/>
<path d="M1371.1 366 V792" stroke="#dddddd" stroke-width="1" stroke-dasharray="3 3"/>
<path d="M1371.1 793 V798.5" stroke="#c2c2c2" stroke-width="1.5"/>
<path d="M1399.4 366 V792" stroke="#dddddd" stroke-width="1" stroke-dasharray="3 3"/>
<path d="M1399.4 793 V798.5" stroke="#c2c2c2" stroke-width="1.5"/>
<path d="M1427.6 366 V792" stroke="#dddddd" stroke-width="1" stroke-dasharray="3 3"/>
<path d="M1427.6 793 V798.5" stroke="#c2c2c2" stroke-width="1.5"/>
<path d="M1455.9 366 V792" stroke="#dddddd" stroke-width="1" stroke-dasharray="3 3"/>
<path d="M1455.9 793 V798.5" stroke="#c2c2c2" stroke-width="1.5"/>
<path d="M1484.2 366 V792" stroke="#dddddd" stroke-width="1" stroke-dasharray="3 3"/>
<path d="M1484.2 793 V798.5" stroke="#c2c2c2" stroke-width="1.5"/>
<path d="M1512.5 366 V792" stroke="#dddddd" stroke-width="1" stroke-dasharray="3 3"/>
<path d="M1512.5 793 V798.5" stroke="#c2c2c2" stroke-width="1.5"/>
<path d="M1540.8 366 V792" stroke="#dddddd" stroke-width="1" stroke-dasharray="3 3"/>
<path d="M1540.8 793 V798.5" stroke="#c2c2c2" stroke-width="1.5"/>
<path d="M1569.0 366 V792" stroke="#dddddd" stroke-width="1" stroke-dasharray="3 3"/>
<path d="M1569.0 793 V798.5" stroke="#c2c2c2" stroke-width="1.5"/>
<path d="M1597.3 366 V792" stroke="#dddddd" stroke-width="1" stroke-dasharray="3 3"/>
<path d="M1597.3 793 V798.5" stroke="#c2c2c2" stroke-width="1.5"/>
<path d="M1625.6 366 V792" stroke="#dddddd" stroke-width="1" stroke-dasharray="3 3"/>
<path d="M1625.6 793 V798.5" stroke="#c2c2c2" stroke-width="1.5"/>
<path d="M1653.9 366 V792" stroke="#dddddd" stroke-width="1" stroke-dasharray="3 3"/>
<path d="M1653.9 793 V798.5" stroke="#c2c2c2" stroke-width="1.5"/>
<path d="M1682.2 366 V792" stroke="#dddddd" stroke-width="1" stroke-dasharray="3 3"/>
<path d="M1682.2 793 V798.5" stroke="#c2c2c2" stroke-width="1.5"/>
<path d="M1710.4 366 V792" stroke="#dddddd" stroke-width="1" stroke-dasharray="3 3"/>
<path d="M1710.4 793 V798.5" stroke="#c2c2c2" stroke-width="1.5"/>
<path d="M1738.7 366 V792" stroke="#dddddd" stroke-width="1" stroke-dasharray="3 3"/>
<path d="M1738.7 793 V798.5" stroke="#c2c2c2" stroke-width="1.5"/>
<path d="M1767.0 366 V792" stroke="#dddddd" stroke-width="1" stroke-dasharray="3 3"/>
<path d="M1767.0 793 V798.5" stroke="#c2c2c2" stroke-width="1.5"/>
<path d="M1795.3 366 V792" stroke="#dddddd" stroke-width="1" stroke-dasharray="3 3"/>
<path d="M1795.3 793 V798.5" stroke="#c2c2c2" stroke-width="1.5"/>
<path d="M1823.6 366 V792" stroke="#dddddd" stroke-width="1" stroke-dasharray="3 3"/>
<path d="M1823.6 793 V798.5" stroke="#c2c2c2" stroke-width="1.5"/>
<path d="M1851.8 366 V792" stroke="#dddddd" stroke-width="1" stroke-dasharray="3 3"/>
<path d="M1851.8 793 V798.5" stroke="#c2c2c2" stroke-width="1.5"/>
<path d="M1880.1 366 V792" stroke="#dddddd" stroke-width="1" stroke-dasharray="3 3"/>
<path d="M1880.1 793 V798.5" stroke="#c2c2c2" stroke-width="1.5"/>
<path d="M1046.5 365 V794" stroke="#c2c2c2" stroke-width="2"/>
<path d="M1045.5 793.2 H1894" stroke="#c8c8c8" stroke-width="2"/>
<clipPath id="rclip"><rect x="1047" y="340" width="860" height="453"/></clipPath><g clip-path="url(#rclip)">
<path d="M1060.0 790.1 L1088.3 783.7 L1116.6 790.7 L1144.8 791.7 L1173.1 788.5 L1201.4 787.2 L1229.7 692.8 L1258.0 789.5 L1286.2 789.2 L1314.5 790.7 L1342.8 792.4 L1371.1 762.6 L1399.4 771.6 L1427.6 761.1 L1455.9 711.3 L1484.2 786.3 L1512.5 784.3 L1540.8 767.9 L1569.0 790.1 L1597.3 791.8 L1625.6 737.6 L1653.9 702.9 L1682.2 716.8 L1710.4 690.5 L1738.7 694.6 L1767.0 679.8 L1795.3 676.1 L1823.6 738.8 L1851.8 727.5 L1880.1 425.0" fill="none" stroke="#1b7c96" stroke-width="3.2" stroke-linejoin="round"/>
<circle cx="1060.0" cy="790.1" r="3.6" fill="#1b7c96"/>
<circle cx="1088.3" cy="783.7" r="3.6" fill="#1b7c96"/>
<circle cx="1116.6" cy="790.7" r="3.6" fill="#1b7c96"/>
<circle cx="1144.8" cy="791.7" r="3.6" fill="#1b7c96"/>
<circle cx="1173.1" cy="788.5" r="3.6" fill="#1b7c96"/>
<circle cx="1201.4" cy="787.2" r="3.6" fill="#1b7c96"/>
<circle cx="1229.7" cy="692.8" r="3.6" fill="#1b7c96"/>
<circle cx="1258.0" cy="789.5" r="3.6" fill="#1b7c96"/>
<circle cx="1286.2" cy="789.2" r="3.6" fill="#1b7c96"/>
<circle cx="1314.5" cy="790.7" r="3.6" fill="#1b7c96"/>
<circle cx="1342.8" cy="792.4" r="3.6" fill="#1b7c96"/>
<circle cx="1371.1" cy="762.6" r="3.6" fill="#1b7c96"/>
<circle cx="1399.4" cy="771.6" r="3.6" fill="#1b7c96"/>
<circle cx="1427.6" cy="761.1" r="3.6" fill="#1b7c96"/>
<circle cx="1455.9" cy="711.3" r="3.6" fill="#1b7c96"/>
<circle cx="1484.2" cy="786.3" r="3.6" fill="#1b7c96"/>
<circle cx="1512.5" cy="784.3" r="3.6" fill="#1b7c96"/>
<circle cx="1540.8" cy="767.9" r="3.6" fill="#1b7c96"/>
<circle cx="1569.0" cy="790.1" r="3.6" fill="#1b7c96"/>
<circle cx="1597.3" cy="791.8" r="3.6" fill="#1b7c96"/>
<circle cx="1625.6" cy="737.6" r="3.6" fill="#1b7c96"/>
<circle cx="1653.9" cy="702.9" r="3.6" fill="#1b7c96"/>
<circle cx="1682.2" cy="716.8" r="3.6" fill="#1b7c96"/>
<circle cx="1710.4" cy="690.5" r="3.6" fill="#1b7c96"/>
<circle cx="1738.7" cy="694.6" r="3.6" fill="#1b7c96"/>
<circle cx="1767.0" cy="679.8" r="3.6" fill="#1b7c96"/>
<circle cx="1795.3" cy="676.1" r="3.6" fill="#1b7c96"/>
<circle cx="1823.6" cy="738.8" r="3.6" fill="#1b7c96"/>
<circle cx="1851.8" cy="727.5" r="3.6" fill="#1b7c96"/>
<circle cx="1880.1" cy="425.0" r="3.6" fill="#1b7c96"/>
<path d="M1060.0 790.7 L1088.3 784.9 L1116.6 791.2 L1144.8 792.1 L1173.1 790.1 L1201.4 789.1 L1229.7 705.8 L1258.0 791.2 L1286.2 791.2 L1314.5 791.2 L1342.8 792.4 L1371.1 773.6 L1399.4 774.1 L1427.6 765.0 L1455.9 716.4 L1484.2 787.3 L1512.5 786.1 L1540.8 767.9 L1569.0 790.7 L1597.3 791.8 L1625.6 744.7 L1653.9 711.3 L1682.2 726.3 L1710.4 702.1 L1738.7 707.3 L1767.0 695.4 L1795.3 691.4 L1823.6 746.2 L1851.8 735.9 L1880.1 549.8" fill="none" stroke="#6f3b72" stroke-width="3.2" stroke-linejoin="round"/>
<circle cx="1060.0" cy="790.7" r="3.6" fill="#6f3b72"/>
<circle cx="1088.3" cy="784.9" r="3.6" fill="#6f3b72"/>
<circle cx="1116.6" cy="791.2" r="3.6" fill="#6f3b72"/>
<circle cx="1144.8" cy="792.1" r="3.6" fill="#6f3b72"/>
<circle cx="1173.1" cy="790.1" r="3.6" fill="#6f3b72"/>
<circle cx="1201.4" cy="789.1" r="3.6" fill="#6f3b72"/>
<circle cx="1229.7" cy="705.8" r="3.6" fill="#6f3b72"/>
<circle cx="1258.0" cy="791.2" r="3.6" fill="#6f3b72"/>
<circle cx="1286.2" cy="791.2" r="3.6" fill="#6f3b72"/>
<circle cx="1314.5" cy="791.2" r="3.6" fill="#6f3b72"/>
<circle cx="1342.8" cy="792.4" r="3.6" fill="#6f3b72"/>
<circle cx="1371.1" cy="773.6" r="3.6" fill="#6f3b72"/>
<circle cx="1399.4" cy="774.1" r="3.6" fill="#6f3b72"/>
<circle cx="1427.6" cy="765.0" r="3.6" fill="#6f3b72"/>
<circle cx="1455.9" cy="716.4" r="3.6" fill="#6f3b72"/>
<circle cx="1484.2" cy="787.3" r="3.6" fill="#6f3b72"/>
<circle cx="1512.5" cy="786.1" r="3.6" fill="#6f3b72"/>
<circle cx="1540.8" cy="767.9" r="3.6" fill="#6f3b72"/>
<circle cx="1569.0" cy="790.7" r="3.6" fill="#6f3b72"/>
<circle cx="1597.3" cy="791.8" r="3.6" fill="#6f3b72"/>
<circle cx="1625.6" cy="744.7" r="3.6" fill="#6f3b72"/>
<circle cx="1653.9" cy="711.3" r="3.6" fill="#6f3b72"/>
<circle cx="1682.2" cy="726.3" r="3.6" fill="#6f3b72"/>
<circle cx="1710.4" cy="702.1" r="3.6" fill="#6f3b72"/>
<circle cx="1738.7" cy="707.3" r="3.6" fill="#6f3b72"/>
<circle cx="1767.0" cy="695.4" r="3.6" fill="#6f3b72"/>
<circle cx="1795.3" cy="691.4" r="3.6" fill="#6f3b72"/>
<circle cx="1823.6" cy="746.2" r="3.6" fill="#6f3b72"/>
<circle cx="1851.8" cy="735.9" r="3.6" fill="#6f3b72"/>
<circle cx="1880.1" cy="549.8" r="3.6" fill="#6f3b72"/>
<path d="M1060.0 791.5 L1088.3 792.1 L1116.6 792.3 L1144.8 792.3 L1173.1 790.7 L1201.4 790.1 L1229.7 779.5 L1258.0 792.3 L1286.2 792.3 L1314.5 792.3 L1342.8 792.4 L1371.1 781.4 L1399.4 790.1 L1427.6 788.3 L1455.9 787.5 L1484.2 790.7 L1512.5 790.1 L1540.8 792.1 L1569.0 792.3 L1597.3 792.3 L1625.6 784.9 L1653.9 783.7 L1682.2 782.9 L1710.4 781.4 L1738.7 779.7 L1767.0 777.4 L1795.3 777.4 L1823.6 785.1 L1851.8 784.6 L1880.1 668.3" fill="none" stroke="#ffbfc9" stroke-width="3.2" stroke-linejoin="round"/>
<circle cx="1060.0" cy="791.5" r="3.6" fill="#ffbfc9"/>
<circle cx="1088.3" cy="792.1" r="3.6" fill="#ffbfc9"/>
<circle cx="1116.6" cy="792.3" r="3.6" fill="#ffbfc9"/>
<circle cx="1144.8" cy="792.3" r="3.6" fill="#ffbfc9"/>
<circle cx="1173.1" cy="790.7" r="3.6" fill="#ffbfc9"/>
<circle cx="1201.4" cy="790.1" r="3.6" fill="#ffbfc9"/>
<circle cx="1229.7" cy="779.5" r="3.6" fill="#ffbfc9"/>
<circle cx="1258.0" cy="792.3" r="3.6" fill="#ffbfc9"/>
<circle cx="1286.2" cy="792.3" r="3.6" fill="#ffbfc9"/>
<circle cx="1314.5" cy="792.3" r="3.6" fill="#ffbfc9"/>
<circle cx="1342.8" cy="792.4" r="3.6" fill="#ffbfc9"/>
<circle cx="1371.1" cy="781.4" r="3.6" fill="#ffbfc9"/>
<circle cx="1399.4" cy="790.1" r="3.6" fill="#ffbfc9"/>
<circle cx="1427.6" cy="788.3" r="3.6" fill="#ffbfc9"/>
<circle cx="1455.9" cy="787.5" r="3.6" fill="#ffbfc9"/>
<circle cx="1484.2" cy="790.7" r="3.6" fill="#ffbfc9"/>
<circle cx="1512.5" cy="790.1" r="3.6" fill="#ffbfc9"/>
<circle cx="1540.8" cy="792.1" r="3.6" fill="#ffbfc9"/>
<circle cx="1569.0" cy="792.3" r="3.6" fill="#ffbfc9"/>
<circle cx="1597.3" cy="792.3" r="3.6" fill="#ffbfc9"/>
<circle cx="1625.6" cy="784.9" r="3.6" fill="#ffbfc9"/>
<circle cx="1653.9" cy="783.7" r="3.6" fill="#ffbfc9"/>
<circle cx="1682.2" cy="782.9" r="3.6" fill="#ffbfc9"/>
<circle cx="1710.4" cy="781.4" r="3.6" fill="#ffbfc9"/>
<circle cx="1738.7" cy="779.7" r="3.6" fill="#ffbfc9"/>
<circle cx="1767.0" cy="777.4" r="3.6" fill="#ffbfc9"/>
<circle cx="1795.3" cy="777.4" r="3.6" fill="#ffbfc9"/>
<circle cx="1823.6" cy="785.1" r="3.6" fill="#ffbfc9"/>
<circle cx="1851.8" cy="784.6" r="3.6" fill="#ffbfc9"/>
<circle cx="1880.1" cy="668.3" r="3.6" fill="#ffbfc9"/>
</g>
<path d="M1045.5 793.2 H1894" stroke="#c8c8c8" stroke-width="2"/>
<text x="0" y="0" font-size="12" fill="#6b6b6b" text-anchor="end" transform="translate(1061.8 806.6) rotate(-45)">01/06/2023</text>
<text x="0" y="0" font-size="12" fill="#6b6b6b" text-anchor="end" transform="translate(1090.1 806.6) rotate(-45)">02/06/2023</text>
<text x="0" y="0" font-size="12" fill="#6b6b6b" text-anchor="end" transform="translate(1146.6 806.6) rotate(-45)">04/06/2023</text>
<text x="0" y="0" font-size="12" fill="#6b6b6b" text-anchor="end" transform="translate(1203.2 806.6) rotate(-45)">06/06/2023</text>
<text x="0" y="0" font-size="12" fill="#6b6b6b" text-anchor="end" transform="translate(1259.8 806.6) rotate(-45)">08/06/2023</text>
<text x="0" y="0" font-size="12" fill="#6b6b6b" text-anchor="end" transform="translate(1316.3 806.6) rotate(-45)">10/06/2023</text>
<text x="0" y="0" font-size="12" fill="#6b6b6b" text-anchor="end" transform="translate(1372.9 806.6) rotate(-45)">12/06/2023</text>
<text x="0" y="0" font-size="12" fill="#6b6b6b" text-anchor="end" transform="translate(1429.4 806.6) rotate(-45)">14/06/2023</text>
<text x="0" y="0" font-size="12" fill="#6b6b6b" text-anchor="end" transform="translate(1486.0 806.6) rotate(-45)">16/06/2023</text>
<text x="0" y="0" font-size="12" fill="#6b6b6b" text-anchor="end" transform="translate(1542.6 806.6) rotate(-45)">18/06/2023</text>
<text x="0" y="0" font-size="12" fill="#6b6b6b" text-anchor="end" transform="translate(1599.1 806.6) rotate(-45)">20/06/2023</text>
<text x="0" y="0" font-size="12" fill="#6b6b6b" text-anchor="end" transform="translate(1655.7 806.6) rotate(-45)">22/06/2023</text>
<text x="0" y="0" font-size="12" fill="#6b6b6b" text-anchor="end" transform="translate(1712.2 806.6) rotate(-45)">24/06/2023</text>
<text x="0" y="0" font-size="12" fill="#6b6b6b" text-anchor="end" transform="translate(1768.8 806.6) rotate(-45)">26/06/2023</text>
<text x="0" y="0" font-size="12" fill="#6b6b6b" text-anchor="end" transform="translate(1825.4 806.6) rotate(-45)">28/06/2023</text>
<path d="M1272.5 895 h13.5" stroke="#1b7c96" stroke-width="2"/><circle cx="1279.25" cy="895" r="3.3" fill="#1b7c96"/>
<text x="1291" y="899.8" font-size="11.6" fill="#757575" textLength="67" lengthAdjust="spacingAndGlyphs">Total Volume</text>
<path d="M1378.5 895 h13.5" stroke="#6f3b72" stroke-width="2"/><circle cx="1385.25" cy="895" r="3.3" fill="#6f3b72"/>
<text x="1397.5" y="899.8" font-size="11.6" fill="#757575" textLength="91" lengthAdjust="spacingAndGlyphs">Downlink Volume</text>
<path d="M1509.5 895 h13.5" stroke="#ffbfc9" stroke-width="2"/><circle cx="1516.25" cy="895" r="3.3" fill="#ffbfc9"/>
<text x="1527.5" y="899.8" font-size="11.6" fill="#757575" textLength="76" lengthAdjust="spacingAndGlyphs">Uplink Volume</text>
</svg>
</body></html>
